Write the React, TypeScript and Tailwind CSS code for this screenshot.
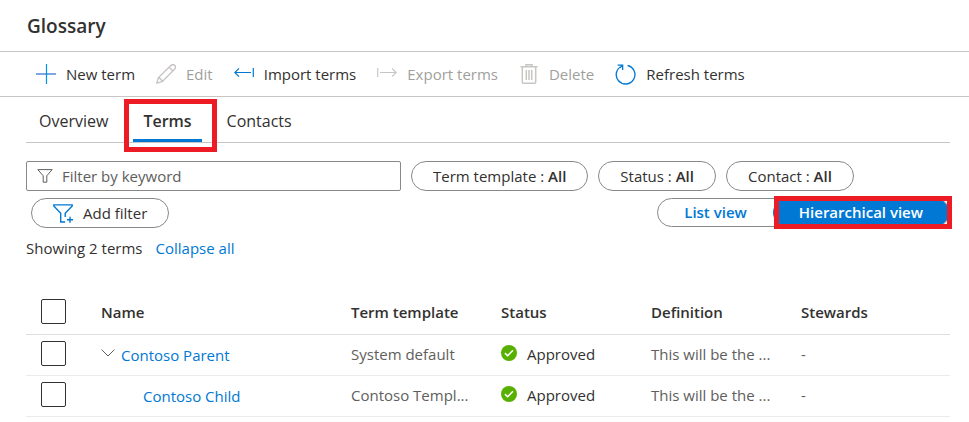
import type { ReactNode } from "react";

const svgProps = { fill: "none", stroke: "currentColor", "aria-hidden": true } as const;

function PlusIcon() {
  return (
    <svg width="20" height="20" viewBox="0 0 20 20" {...svgProps}>
      <path d="M0 10H20" stroke="#7ea6e0" strokeWidth="2" />
      <path d="M10.5 0V20" stroke="#0091e8" strokeWidth="1.2" />
    </svg>
  );
}

function EditIcon() {
  return (
    <svg width="20" height="20" viewBox="0 0 20 20" strokeWidth="1.4" strokeLinejoin="round" {...svgProps}>
      <path d="M.8 19.2 2.3 13.8 14.8 1.6Q17-.2 18.9 1.5 20.3 3.3 18.5 5.3L6.1 17.7ZM2.3 13.8Q5.4 14.3 6.1 17.7M13.2 3.2 16.9 6.9" />
    </svg>
  );
}

function ImportIcon() {
  return (
    <svg width="20" height="20" viewBox="0 0 20 20" strokeWidth="1.2" {...svgProps}>
      <path d="M.8 8.5H17M5 4.3 .8 8.5 5 12.7M19.3 4V13" />
    </svg>
  );
}

function ExportIcon() {
  return (
    <svg width="20" height="20" viewBox="0 0 20 20" strokeWidth="1.2" {...svgProps}>
      <path d="M3 8.5H19.2M15 4.3 19.2 8.5 15 12.7M.7 4V13" />
    </svg>
  );
}

function DeleteIcon() {
  return (
    <svg width="20" height="20" viewBox="0 0 20 20" strokeWidth="1.5" {...svgProps}>
      <path d="M1.5 2.8H18.5M7 2.8V.8H13V2.8M3.3 3V18Q3.3 19.2 4.6 19.2H15.4Q16.7 19.2 16.7 18V3M7.3 6V16M10 6V16M12.7 6V16" />
    </svg>
  );
}

function RefreshIcon() {
  return (
    <svg width="21" height="21" viewBox="0 0 22 22" strokeWidth="1.4" {...svgProps}>
      <path d="M13.2 1.6A9.8 9.8 0 1 1 7.4 2.1M2.8 1.2H8V6.4M8 1.2 5.2 4" />
    </svg>
  );
}

function FunnelIcon() {
  return (
    <svg width="16" height="14" viewBox="0 0 16 14" strokeWidth="1" {...svgProps}>
      <path d="M.8.6H15.2L9.8 6.8V13.2H6.2V6.8Z" />
    </svg>
  );
}

function AddFilterIcon() {
  return (
    <svg width="20" height="19" viewBox="0 0 20 19" strokeWidth="1.4" {...svgProps}>
      <path d="M12.2 18H7.7V9.3L.8 2V.9H19.2V2L12.2 9.3V13M17 12.8V18.8M14 15.8H20" />
    </svg>
  );
}

function ApprovedIcon() {
  return (
    <svg width="16" height="16" viewBox="0 0 16 16" aria-hidden="true">
      <circle cx="8" cy="8" r="8" fill="#57b000" />
      <path d="M3.9 8.1 6.6 10.8 12 5.2" fill="none" stroke="#fff" strokeWidth="1.5" />
    </svg>
  );
}

function Command({ icon, label, disabled = false }: { icon: ReactNode; label: string; disabled?: boolean }) {
  return (
    <button type="button" disabled={disabled} className="flex items-center gap-2.5 whitespace-nowrap">
      <span className={disabled ? "text-[#c8c6c4]" : "text-[#0078d4]"}>{icon}</span>
      <span className={disabled ? "text-[#a19f9d]" : "text-[#323130]"}>{label}</span>
    </button>
  );
}

function FilterPill({ name }: { name: string }) {
  return (
    <button type="button" className="h-[30px] whitespace-nowrap rounded-full border border-[#8a8886] px-[21px]">
      {name} : <span className="font-semibold">All</span>
    </button>
  );
}

function Check({ label }: { label: string }) {
  return (
    <input
      type="checkbox"
      aria-label={label}
      className="ml-[15px] block size-[25px] appearance-none rounded-xs border border-[#323130] bg-white checked:bg-[#0078d4]"
    />
  );
}

const terms = [
  { name: "Contoso Parent", template: "System default", definition: "This will be the ...", child: false },
  { name: "Contoso Child", template: "Contoso Templ...", definition: "This will be the ...", child: true },
];

export default function App() {
  return (
    <main className="bg-white pb-1 font-['Open_Sans','Noto_Sans',sans-serif] text-[15px] leading-5 text-[#323130]">
      <header className="border-b border-[#c8c6c4] px-[27px] pt-3.5 pb-[13px]">
        <h1 className="text-[19px] leading-6 font-semibold">Glossary</h1>
      </header>

      <div role="toolbar" aria-label="Glossary actions" className="flex h-[45px] items-center gap-[21px] border-b border-[#c8c6c4] px-9">
        <Command icon={<PlusIcon />} label="New term" />
        <Command icon={<EditIcon />} label="Edit" disabled />
        <Command icon={<ImportIcon />} label="Import terms" />
        <Command icon={<ExportIcon />} label="Export terms" disabled />
        <Command icon={<DeleteIcon />} label="Delete" disabled />
        <Command icon={<RefreshIcon />} label="Refresh terms" />
      </div>

      <div className="pr-[19px] pl-[26px]">
        <div role="tablist" className="flex h-[46px] items-end gap-[15px] border-b border-[#c8c6c4] pl-[3px] text-base">
          <button type="button" role="tab" aria-selected="false" className="h-[42px] border-b-3 border-transparent px-2.5 pt-0.5">
            Overview
          </button>
          <div className="relative">
            <button type="button" role="tab" aria-selected="true" className="block h-[42px] border-b-3 border-[#0078d4] px-2.5 pt-0.5 font-semibold">
              Terms
            </button>
            <span className="pointer-events-none absolute -top-px -right-[15px] -bottom-2.5 -left-[9px] border-5 border-[#ed1c24]" />
          </div>
          <button type="button" role="tab" aria-selected="false" className="h-[42px] border-b-3 border-transparent px-2.5 pt-0.5">
            Contacts
          </button>
        </div>

        <div className="mt-[18px] flex flex-wrap items-center gap-2.5">
          <label className="flex h-[30px] w-[375px] items-center gap-[9px] rounded-xs border border-[#8a8886] px-2.5 text-[#605e5c]">
            <FunnelIcon />
            <input type="text" aria-label="Filter by keyword" placeholder="Filter by keyword" className="min-w-0 flex-1 outline-none placeholder:text-[#605e5c]" />
          </label>
          <FilterPill name="Term template" />
          <FilterPill name="Status" />
          <FilterPill name="Contact" />
        </div>

        <div className="mt-[7px] flex items-start justify-between pl-[5px]">
          <button type="button" className="flex h-[30px] items-center gap-2.5 rounded-full border border-[#8a8886] px-[21px]">
            <span className="text-[#0078d4]"><AddFilterIcon /></span>
            Add filter
          </button>
          <div className="flex h-[29px] rounded-full border border-[#8a8886] font-semibold">
            <button type="button" className="px-[26px] pb-0.5 text-[#0078d4]">List view</button>
            <div className="relative">
              <button type="button" className="block h-full rounded-full bg-[#0078d4] px-[26px] pb-0.5 text-white">Hierarchical view</button>
              <span className="pointer-events-none absolute -inset-y-[3px] -right-[3px] left-px border-5 border-[#ed1c24]" />
            </div>
          </div>
        </div>

        <div className="mt-2.5 flex gap-[13px]">
          <span>Showing 2 terms</span>
          <button type="button" className="text-[#0078d4]">Collapse all</button>
        </div>

        <table className="mt-[30px] w-full table-fixed text-left">
          <colgroup>
            <col className="w-[75px]" />
            <col className="w-[250px]" />
            <col className="w-[150px]" />
            <col className="w-[150px]" />
            <col className="w-[150px]" />
            <col />
          </colgroup>
          <thead>
            <tr className="h-[46px] border-b border-[#e1dfdd] *:pt-0.5 *:font-semibold">
              <th><Check label="Select all terms" /></th>
              <th>Name</th>
              <th>Term template</th>
              <th>Status</th>
              <th>Definition</th>
              <th>Stewards</th>
            </tr>
          </thead>
          <tbody>
            {terms.map((term) => (
              <tr key={term.name} className="h-[41px] border-b border-[#edebe9] text-[#605e5c] *:pb-0.5">
                <td><Check label={`Select ${term.name}`} /></td>
                <td>
                  <div className={term.child ? "pt-0.5 pl-[42px]" : "flex items-center gap-1.5 pt-0.5"}>
                    {!term.child && (
                      <button type="button" aria-label="Collapse Contoso Parent" className="pb-1">
                        <svg width="14" height="8" viewBox="0 0 14 8" strokeWidth="1" {...svgProps}>
                          <path d="M.5.5 7 7 13.5.5" />
                        </svg>
                      </button>
                    )}
                    <a href="#term" className="text-[#0078d4]">{term.name}</a>
                  </div>
                </td>
                <td className="whitespace-nowrap">{term.template}</td>
                <td>
                  <div className="flex items-center gap-2.5 text-[#323130]">
                    <span className="pb-0.5"><ApprovedIcon /></span>
                    Approved
                  </div>
                </td>
                <td className="whitespace-nowrap">{term.definition}</td>
                <td>-</td>
              </tr>
            ))}
          </tbody>
        </table>
      </div>
    </main>
  );
}
